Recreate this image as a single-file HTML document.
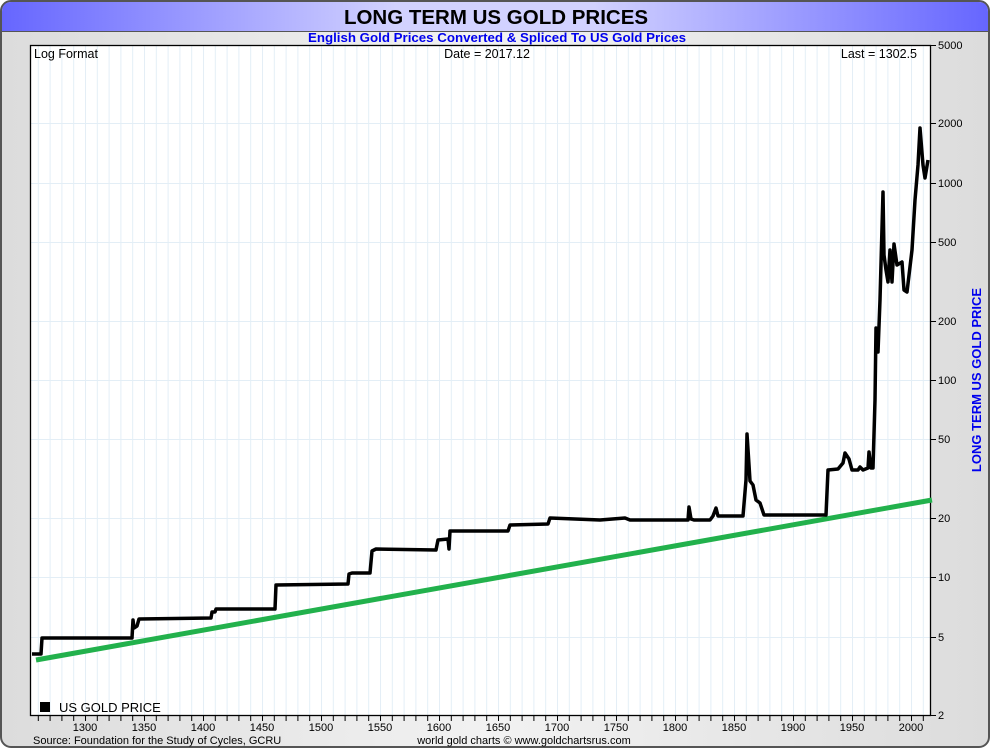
<!DOCTYPE html>
<html><head><meta charset="utf-8"><style>
html,body{margin:0;padding:0;background:#fff}
body{width:992px;height:750px;overflow:hidden;font-family:"Liberation Sans",sans-serif}
</style></head><body>
<svg width="992" height="750" xmlns="http://www.w3.org/2000/svg" font-family="Liberation Sans, sans-serif">
<defs>
<linearGradient id="hd" x1="0" x2="1" y1="0" y2="0">
<stop offset="0" stop-color="#6666ff"/><stop offset="0.4" stop-color="#d2d2ff"/><stop offset="0.6" stop-color="#d2d2ff"/><stop offset="1" stop-color="#6666ff"/>
</linearGradient>
<linearGradient id="bg" x1="0" x2="1" y1="0" y2="0">
<stop offset="0" stop-color="#dcdcdc"/><stop offset="0.5" stop-color="#f2f2f2"/><stop offset="1" stop-color="#dcdcdc"/>
</linearGradient>
<pattern id="vg" patternUnits="userSpaceOnUse" x="37.8" y="0" width="11.8" height="10">
<rect x="0" y="0" width="1" height="10" fill="#e3eef6"/>
</pattern>
<pattern id="tk" patternUnits="userSpaceOnUse" x="37.8" y="0" width="11.8" height="10">
<rect x="0" y="0" width="1" height="10" fill="#000"/>
</pattern>
</defs>
<rect x="1" y="1" width="988" height="746" rx="10" fill="url(#bg)" stroke="#555" stroke-width="2"/>
<path d="M2 31 V12 Q2 2 12 2 H978 Q988 2 988 12 V31 Z" fill="url(#hd)"/>
<line x1="2" y1="31.5" x2="988" y2="31.5" stroke="#555" stroke-width="1"/>
<text x="496" y="24" text-anchor="middle" font-size="20.5" font-weight="bold" fill="#000">LONG TERM US GOLD PRICES</text>
<text x="497" y="42" text-anchor="middle" font-size="13.3" font-weight="bold" fill="#0000ee">English Gold Prices Converted &amp; Spliced To US Gold Prices</text>
<rect x="30" y="45" width="900" height="670" fill="#fff"/>
<rect x="30" y="45" width="900" height="670" fill="url(#vg)"/>
<g stroke="#e3eef6" stroke-width="1">
<line x1="30" x2="930" y1="123.5" y2="123.5"/><line x1="30" x2="930" y1="183.5" y2="183.5"/>
<line x1="30" x2="930" y1="242.5" y2="242.5"/><line x1="30" x2="930" y1="321.5" y2="321.5"/>
<line x1="30" x2="930" y1="380.5" y2="380.5"/><line x1="30" x2="930" y1="439.5" y2="439.5"/>
<line x1="30" x2="930" y1="518.5" y2="518.5"/><line x1="30" x2="930" y1="577.5" y2="577.5"/>
<line x1="30" x2="930" y1="637.5" y2="637.5"/>
</g>
<rect x="30.5" y="45.5" width="900" height="670" fill="none" stroke="#000" stroke-width="1.3"/>
<rect x="30" y="716" width="900" height="5" fill="url(#tk)"/>
<g stroke="#000" stroke-width="1">
<line x1="930" x2="936" y1="45.5" y2="45.5"/><line x1="930" x2="936" y1="123.5" y2="123.5"/>
<line x1="930" x2="936" y1="183.5" y2="183.5"/><line x1="930" x2="936" y1="242.5" y2="242.5"/>
<line x1="930" x2="936" y1="321.5" y2="321.5"/><line x1="930" x2="936" y1="380.5" y2="380.5"/>
<line x1="930" x2="936" y1="439.5" y2="439.5"/><line x1="930" x2="936" y1="518.5" y2="518.5"/>
<line x1="930" x2="936" y1="577.5" y2="577.5"/><line x1="930" x2="936" y1="637.5" y2="637.5"/>
<line x1="930" x2="936" y1="715.5" y2="715.5"/>
</g>
<g font-size="11" fill="#000">
<text x="938" y="49">5000</text><text x="938" y="127">2000</text><text x="938" y="187">1000</text>
<text x="938" y="246">500</text><text x="938" y="325">200</text><text x="938" y="384">100</text>
<text x="938" y="443">50</text><text x="938" y="522">20</text><text x="938" y="581">10</text>
<text x="938" y="641">5</text><text x="938" y="719">2</text>
</g>
<g font-size="11" fill="#000" text-anchor="middle">
<text x="85" y="731">1300</text><text x="144" y="731">1350</text><text x="203" y="731">1400</text>
<text x="262" y="731">1450</text><text x="321" y="731">1500</text><text x="380" y="731">1550</text>
<text x="439" y="731">1600</text><text x="498" y="731">1650</text><text x="557" y="731">1700</text>
<text x="616" y="731">1750</text><text x="675" y="731">1800</text><text x="734" y="731">1850</text>
<text x="793" y="731">1900</text><text x="852" y="731">1950</text><text x="911" y="731">2000</text>
</g>
<text x="33" y="744" font-size="11" fill="#000">Source: Foundation for the Study of Cycles, GCRU</text>
<text x="524" y="744" font-size="11" fill="#000" text-anchor="middle">world gold charts © www.goldchartsrus.com</text>
<text x="34" y="58" font-size="12.5" fill="#000">Log Format</text>
<text x="487" y="58" font-size="12.5" fill="#000" text-anchor="middle">Date = 2017.12</text>
<text x="917" y="58" font-size="12.5" fill="#000" text-anchor="end">Last = 1302.5</text>
<rect x="40" y="702" width="10" height="10" fill="#000"/>
<text x="59" y="712" font-size="13" fill="#000">US GOLD PRICE</text>
<text transform="translate(981,380) rotate(-90)" font-size="13" font-weight="bold" fill="#0000ee" text-anchor="middle">LONG TERM US GOLD PRICE</text>
<line x1="36" y1="660" x2="932" y2="500" stroke="#22b14c" stroke-width="5"/>
<polyline fill="none" stroke="#000" stroke-width="3.5" stroke-linejoin="round" points="32,654 41,654 42,638 132,638 133,620 134,628 137,626 139,619 211,618 212,612 215,612 216,609 275,609 276,585 348,584 349,574 352,573 370,573 372,551 376,549 436,550 438,540 448,539 449,549 450,531 508,531 510,525 548,524 550,518 575,519 600,520 625,518 630,520 688,520 689,507 691,519 694,520 710,520 713,516 716,508 718,516 743,516 746,480 747,434 749,465 750,481 753,485 756,500 760,503 764,515 826,515 828,470 838,469 843,463 845,453 849,459 852,470 858,470 860,467 863,470 868,468 869,452 871,468 873,468 875,400 876,328 878,352 880,300 883,192 884,255 886,270 888,282 890,250 892,282 894,244 897,265 902,262 904,290 907,292 912,250 915,200 918,165 920,128 923,165 925,178 928,160"/>
</svg>
</body></html>
